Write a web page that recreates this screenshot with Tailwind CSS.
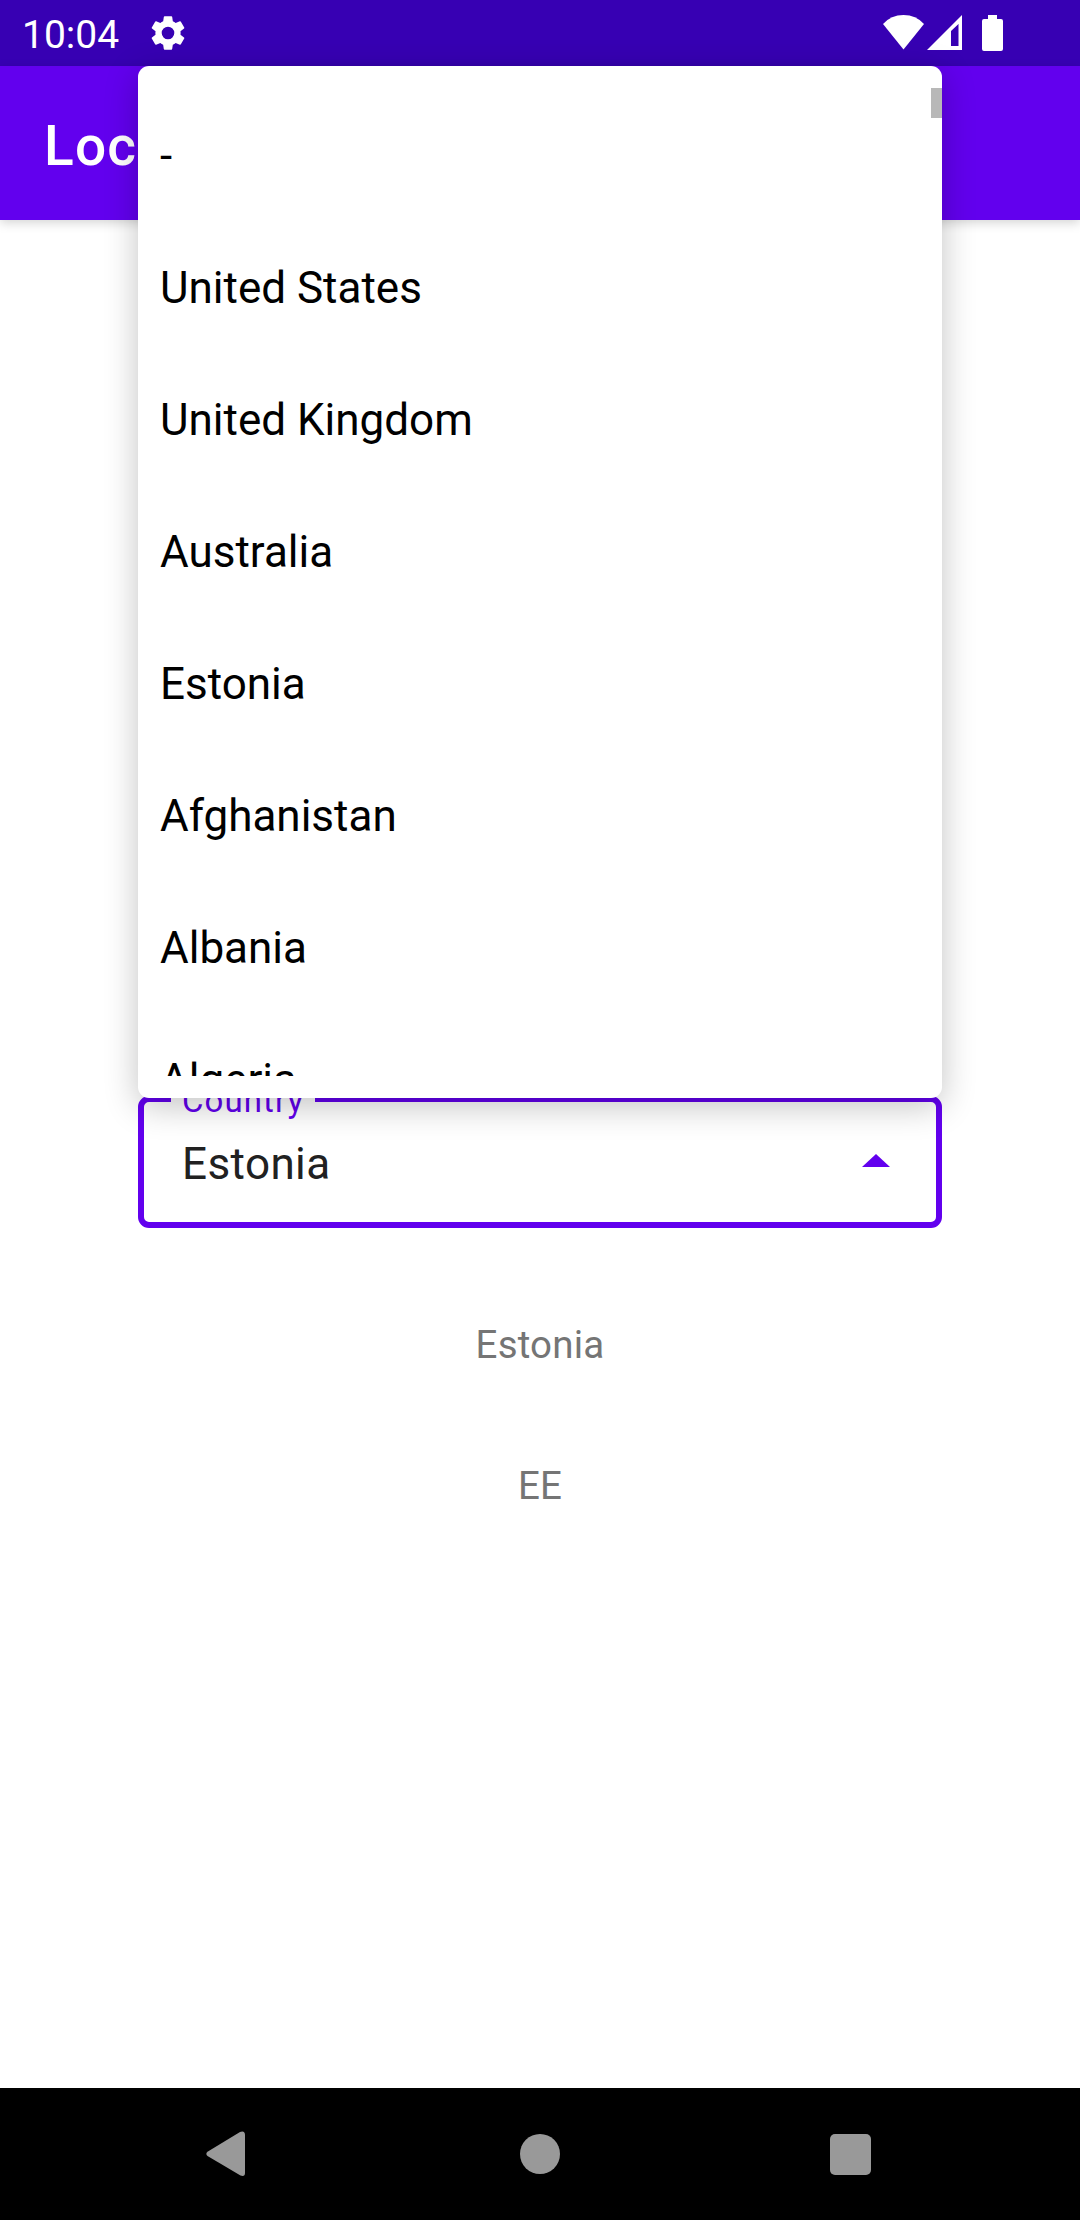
<!DOCTYPE html>
<html lang="en">
<head>
<meta charset="utf-8">
<title>Locale</title>
<script src="https://cdn.jsdelivr.net/npm/@tailwindcss/browser@4"></script>
</head>
<body class="relative flex h-[2220px] w-[1080px] flex-col overflow-hidden bg-white font-['Roboto',sans-serif] antialiased">
  <!-- Status bar -->
  <header class="flex h-[66px] shrink-0 items-center bg-[#3700b3] pl-[22px] text-white">
    <span class="w-[122px] pt-[4px] text-[39px] leading-[62px]">10:04</span>
    <svg class="ml-[3px] h-[42px] w-[42px]" viewBox="0 0 24 24" fill="currentColor"><path d="M19.14 12.94c.04-.3.06-.61.06-.94s-.02-.64-.07-.94l2.03-1.58a.5.5 0 0 0 .12-.61l-1.92-3.32a.49.49 0 0 0-.59-.22l-2.39.96a7 7 0 0 0-1.62-.94l-.36-2.54a.48.48 0 0 0-.48-.41h-3.84a.48.48 0 0 0-.47.41l-.36 2.54c-.59.24-1.13.57-1.62.94l-2.39-.96a.48.48 0 0 0-.59.22L2.74 8.87a.48.48 0 0 0 .12.61l2.03 1.58c-.05.3-.09.63-.09.94s.02.64.07.94l-2.03 1.58a.5.5 0 0 0-.12.61l1.92 3.32c.12.22.37.29.59.22l2.39-.96c.5.38 1.03.7 1.62.94l.36 2.54c.05.24.24.41.48.41h3.84c.24 0 .44-.17.47-.41l.36-2.54c.59-.24 1.13-.56 1.62-.94l2.39.96c.22.08.47 0 .59-.22l1.92-3.32a.48.48 0 0 0-.12-.61zM12 15.6a3.6 3.6 0 1 1 0-7.2 3.6 3.6 0 0 1 0 7.2z"/></svg>
    <svg class="mr-[70px] ml-auto h-[66px] w-[127px]" viewBox="0 0 127 66" fill="currentColor">
      <path d="M0 24Q8 15 20.500 15T41 24L20.500 49.500z"/>
      <path fill-rule="evenodd" d="M44 50L79 15V50zM68 31V46H75.500V24z"/>
      <path d="M105 15h9v4h4a2 2 0 0 1 2 2v28a2 2 0 0 1-2 2H101a2 2 0 0 1-2-2V21a2 2 0 0 1 2-2h4z"/>
    </svg>
  </header>

  <!-- App bar -->
  <div class="z-10 flex h-[154px] shrink-0 items-center bg-[#6200ee] pl-[44px] shadow-[0_3px_10px_rgba(0,0,0,0.17)]">
    <h1 class="pt-[5px] text-[55px] leading-[64px] font-medium tracking-[1.2px] text-white">Loc</h1>
  </div>

  <main class="flex grow flex-col items-center pt-[876px]">
    <!-- Outlined country field -->
    <div class="relative flex h-[132px] w-[804px] shrink-0 items-center justify-between rounded-[11px] border-[6px] border-[#6200ee] pr-[46px] pl-[38px]">
      <span class="absolute top-[-21px] left-[27px] w-[144px] bg-white pl-[11px] text-[33px] leading-[40px] tracking-[1.1px] text-[#6200ee]">Country</span>
      <span class="pt-[3px] text-[44px] leading-[52px] tracking-[0.4px] text-[#212121]">Estonia</span>
      <svg class="mb-[3px] h-[13px] w-[28px]" viewBox="0 0 28 13" fill="#6200ee"><path d="M0 13L14 0L28 13z"/></svg>
    </div>
    <p class="mt-[94px] text-[38.5px] leading-[46px] tracking-[0.2px] text-[#757575]">Estonia</p>
    <p class="mt-[95px] text-[38.5px] leading-[46px] tracking-[0.2px] text-[#757575]">EE</p>
  </main>

  <!-- Navigation bar -->
  <nav class="flex h-[132px] shrink-0 items-center bg-black pl-[206px]">
    <svg class="h-[46px] w-[40px]" viewBox="0 0 40 46" fill="#999"><path d="M1.500 20.800L34 .9Q39 -.8 39 4V42Q39 46 34.500 44.500L1.500 25Q-.8 23 1.500 20.800z"/></svg>
    <span class="ml-[274px] h-[40px] w-[40px] rounded-full bg-[#999]"></span>
    <span class="ml-[270px] h-[41px] w-[41px] rounded-[5px] bg-[#999]"></span>
  </nav>

  <!-- Open dropdown menu -->
  <div class="absolute top-[66px] left-[138px] z-20 h-[1032px] w-[804px] rounded-[11px] bg-white py-[22px] shadow-[0_8px_34px_rgba(0,0,0,0.24)]">
    <ul class="h-[988px] overflow-hidden text-[44px] leading-[136px] text-black">
      <li class="h-[132px] pl-[22px]">-</li>
      <li class="h-[132px] pl-[22px]">United States</li>
      <li class="h-[132px] pl-[22px]">United Kingdom</li>
      <li class="h-[132px] pl-[22px]">Australia</li>
      <li class="h-[132px] pl-[22px]">Estonia</li>
      <li class="h-[132px] pl-[22px]">Afghanistan</li>
      <li class="h-[132px] pl-[22px]">Albania</li>
      <li class="h-[132px] pl-[22px]">Algeria</li>
    </ul>
    <div class="absolute top-[22px] right-0 h-[30px] w-[11px] bg-[#b8b8b8]"></div>
  </div>
</body>
</html>
